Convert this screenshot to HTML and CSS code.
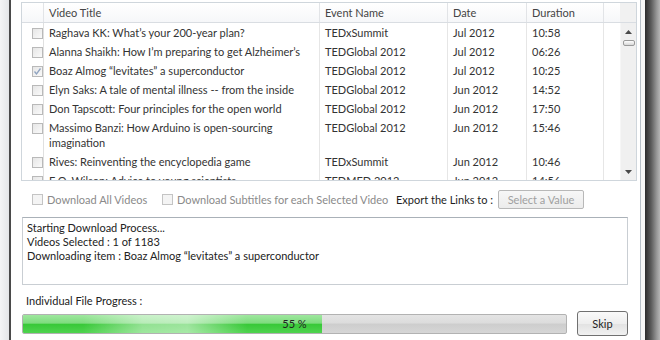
FILE: index.html
```html
<!DOCTYPE html>
<html>
<head>
<meta charset="utf-8">
<link rel="stylesheet" href="styles.css">
</head>
<body>
<div class="window">
  <div class="edge-left"></div>
  <div class="edge-line"></div>
  <main class="content">
    <section class="grid">
      <div class="grid-header">
        <div class="hc"></div>
        <div class="hc">Video Title</div>
        <div class="hc">Event Name</div>
        <div class="hc">Date</div>
        <div class="hc">Duration</div>
        <div class="hc filler"></div>
        <div class="hc corner"></div>
      </div>
      <div class="grid-body">
        <div class="rows">
          <div class="row"><div class="cell chk"><span class="cb"></span></div><div class="cell">Raghava KK: What’s your 200-year plan?</div><div class="cell">TEDxSummit</div><div class="cell">Jul 2012</div><div class="cell">10:58</div><div class="cell end"></div></div>
          <div class="row"><div class="cell chk"><span class="cb"></span></div><div class="cell">Alanna Shaikh: How I’m preparing to get Alzheimer’s</div><div class="cell">TEDGlobal 2012</div><div class="cell">Jul 2012</div><div class="cell">06:26</div><div class="cell end"></div></div>
          <div class="row"><div class="cell chk"><span class="cb checked"><svg viewBox="0 0 11 11" width="11" height="11"><path d="M2.5 5.5 L4.5 8 L8.5 2.5" fill="none" stroke="#8fa3c0" stroke-width="1.3"/></svg></span></div><div class="cell">Boaz Almog “levitates” a superconductor</div><div class="cell">TEDGlobal 2012</div><div class="cell">Jul 2012</div><div class="cell">10:25</div><div class="cell end"></div></div>
          <div class="row"><div class="cell chk"><span class="cb"></span></div><div class="cell">Elyn Saks: A tale of mental illness -- from the inside</div><div class="cell">TEDGlobal 2012</div><div class="cell">Jun 2012</div><div class="cell">14:52</div><div class="cell end"></div></div>
          <div class="row"><div class="cell chk"><span class="cb"></span></div><div class="cell">Don Tapscott: Four principles for the open world</div><div class="cell">TEDGlobal 2012</div><div class="cell">Jun 2012</div><div class="cell">17:50</div><div class="cell end"></div></div>
          <div class="row"><div class="cell chk"><span class="cb"></span></div><div class="cell narrow">Massimo Banzi: How Arduino is open-sourcing imagination</div><div class="cell">TEDGlobal 2012</div><div class="cell">Jun 2012</div><div class="cell">15:46</div><div class="cell end"></div></div>
          <div class="row"><div class="cell chk"><span class="cb"></span></div><div class="cell">Rives: Reinventing the encyclopedia game</div><div class="cell">TEDxSummit</div><div class="cell">Jun 2012</div><div class="cell">10:46</div><div class="cell end"></div></div>
          <div class="row"><div class="cell chk"><span class="cb"></span></div><div class="cell">E.O. Wilson: Advice to young scientists</div><div class="cell">TEDMED 2012</div><div class="cell">Jun 2012</div><div class="cell">14:56</div><div class="cell end"></div></div>
        </div>
        <div class="vscroll">
          <div class="sb-btn"><svg viewBox="0 0 7 4" width="7" height="4"><path d="M3.5 0 L7 4 L0 4 Z" fill="#4a4a4a"/></svg></div>
          <div class="sb-track"><div class="thumb"></div></div>
          <div class="sb-btn"><svg viewBox="0 0 7 4" width="7" height="4"><path d="M0 0 L7 0 L3.5 4 Z" fill="#4a4a4a"/></svg></div>
        </div>
      </div>
    </section>

    <div class="options">
      <label class="opt first"><span class="cb dis"></span>Download All Videos</label>
      <label class="opt second"><span class="cb dis"></span>Download Subtitles for each Selected Video</label>
      <span class="export">Export the Links to :</span>
      <span class="select">Select a Value</span>
    </div>

    <div class="log">
      <div>Starting Download Process...</div>
      <div>Videos Selected : 1 of 1183</div>
      <div>Downloading item : Boaz Almog “levitates” a superconductor</div>
    </div>

    <div class="plabel">Individual File Progress :</div>

    <div class="progress-row">
      <div class="progress">
        <div class="fill" style="width:55%"></div>
        <span class="ptext">55 %</span>
      </div>
      <button class="skip">Skip</button>
    </div>
  </main>
  <div class="edge-gap"></div>
  <div class="edge-right"></div>
</div>
</body>
</html>
```
FILE: styles.css
```css
* { box-sizing: border-box; }
html, body {
  margin: 0;
  padding: 0;
  background: #fff;
}
body {
  width: 660px;
  height: 340px;
  overflow: hidden;
  font-family: Lato, "Open Sans", sans-serif;
  font-size: 11px;
  color: #333;
}
.window {
  display: flex;
  height: 340px;
}
.edge-left {
  width: 9px;
  background: linear-gradient(to right, #f4f5f6, #e4e6e8);
}
.edge-line {
  width: 2px;
  background: #4a4a4a;
}
.content {
  width: 629px;
  background: #fff;
  display: flex;
  flex-direction: column;
}
.edge-gap {
  width: 5px;
  border-left: 1px solid #b8c0c8;
  background: #f7f7f7;
}
.edge-right {
  flex: 1;
  background: linear-gradient(to right, #2c2c2c, #5a5a5a 40%, #9a9a9a 80%, #b5b5b5);
}

/* grid */
.grid {
  margin: 2px 0 0 10px;
  width: 616px;
  height: 179px;
  border: 1px solid #cfd6dc;
  display: flex;
  flex-direction: column;
  overflow: hidden;
}
.grid-header {
  display: grid;
  grid-template-columns: 22px 276px 128px 79px 77px 16px 16px;
  height: 20px;
  border-bottom: 1px solid #d9dde2;
  background: linear-gradient(#ffffff, #f6f7f9);
  color: #444;
}
.hc {
  border-right: 1px solid #e2e4e7;
  padding-left: 5px;
  line-height: 19px;
  white-space: nowrap;
}
.hc.filler { border-right: none; }
.hc.corner { border-right: none; background: #f1f1f1; }
.grid-body {
  flex: 1;
  display: flex;
  overflow: hidden;
}
.rows {
  width: 598px;
  overflow: hidden;
}
.row {
  display: grid;
  grid-template-columns: 22px 276px 128px 79px 77px 16px;
}
.cell {
  border-right: 1px solid #e6e6e6;
  padding: 2px 4px 2px 5px;
  line-height: 15px;
}
.cell.narrow { padding-right: 20px; }
.cell.end { border-right: none; }
.cell.chk {
  padding: 4px 0 0 10px;
  border-right-color: #e0e0e0;
}
.cb {
  display: inline-block;
  width: 11px;
  height: 11px;
  border: 1px solid #b9b9b9;
  background: linear-gradient(135deg, #e6e6e6, #fafafa);
  position: relative;
  flex: none;
}
.cb svg { position: absolute; left: -1px; top: -1px; }

.vscroll {
  width: 16px;
  background: #f0f0f0;
  border-left: 1px solid #f6f6f6;
  display: flex;
  flex-direction: column;
}
.sb-btn {
  height: 17px;
  display: flex;
  align-items: center;
  justify-content: center;
}
.sb-track {
  flex: 1;
  padding: 0 1px 0 2px;
}
.thumb {
  height: 6px;
  border: 1px solid #9a9a9a;
  border-radius: 2px;
  background: linear-gradient(#fdfdfd, #d8d8d8);
}

/* options */
.options {
  margin: 8px 0 0 21px;
  height: 20px;
  display: flex;
  align-items: center;
  white-space: nowrap;
}
.opt {
  display: flex;
  align-items: center;
  color: #8a8a8a;
  flex: none;
}
.opt.first { width: 130px; }
.opt.second { width: 234px; }
.opt .cb { margin-right: 4px; }
.cb.dis {
  background: #f4f4f4;
  border-color: #c4c4c4;
}
.export {
  flex: none;
  margin-right: 5px;
  color: #1e1e1e;
}
.select {
  flex: none;
  width: 86px;
  height: 19px;
  border: 1px solid #b8b8b8;
  border-radius: 2px;
  background: linear-gradient(#f7f7f7, #ececec);
  color: #a0a0a0;
  text-align: center;
  line-height: 17px;
}

/* log */
.log {
  margin: 8px 0 0 11px;
  width: 606px;
  height: 68px;
  border: 1px solid #c9ced3;
  border-top-color: #aab1b8;
  padding: 3px 4px;
  line-height: 14px;
  color: #222;
}

.plabel {
  margin: 9px 0 0 15px;
  line-height: 14px;
  color: #222;
}

.progress-row {
  margin: 3px 0 0 11px;
  display: flex;
  align-items: center;
  height: 25px;
}
.progress {
  position: relative;
  width: 545px;
  height: 20px;
  border: 1px solid #b2b2b2;
  border-radius: 2px;
  background: linear-gradient(#e4e4e4, #dcdcdc 45%, #cdcdcd 50%, #d6d6d6);
  overflow: hidden;
}
.fill {
  height: 100%;
  background:
    linear-gradient(to right, rgba(255,255,255,0) 20%, rgba(255,255,255,0.45) 40%, rgba(255,255,255,0.5) 55%, rgba(255,255,255,0) 75%),
    linear-gradient(#9fe79f, #7ddc7d 45%, #38c838 52%, #4fd44f);
}
.ptext {
  position: absolute;
  left: 0;
  right: 0;
  top: 0;
  text-align: center;
  line-height: 18px;
  color: #222;
}
.skip {
  margin-left: 10px;
  width: 51px;
  height: 25px;
  border: 1px solid #707070;
  border-radius: 3px;
  background: linear-gradient(#fafafa, #eeeeee 50%, #e2e2e2 51%, #f1f1f1);
  font-family: inherit;
  font-size: 11px;
  color: #222;
  padding: 0;
}
```
